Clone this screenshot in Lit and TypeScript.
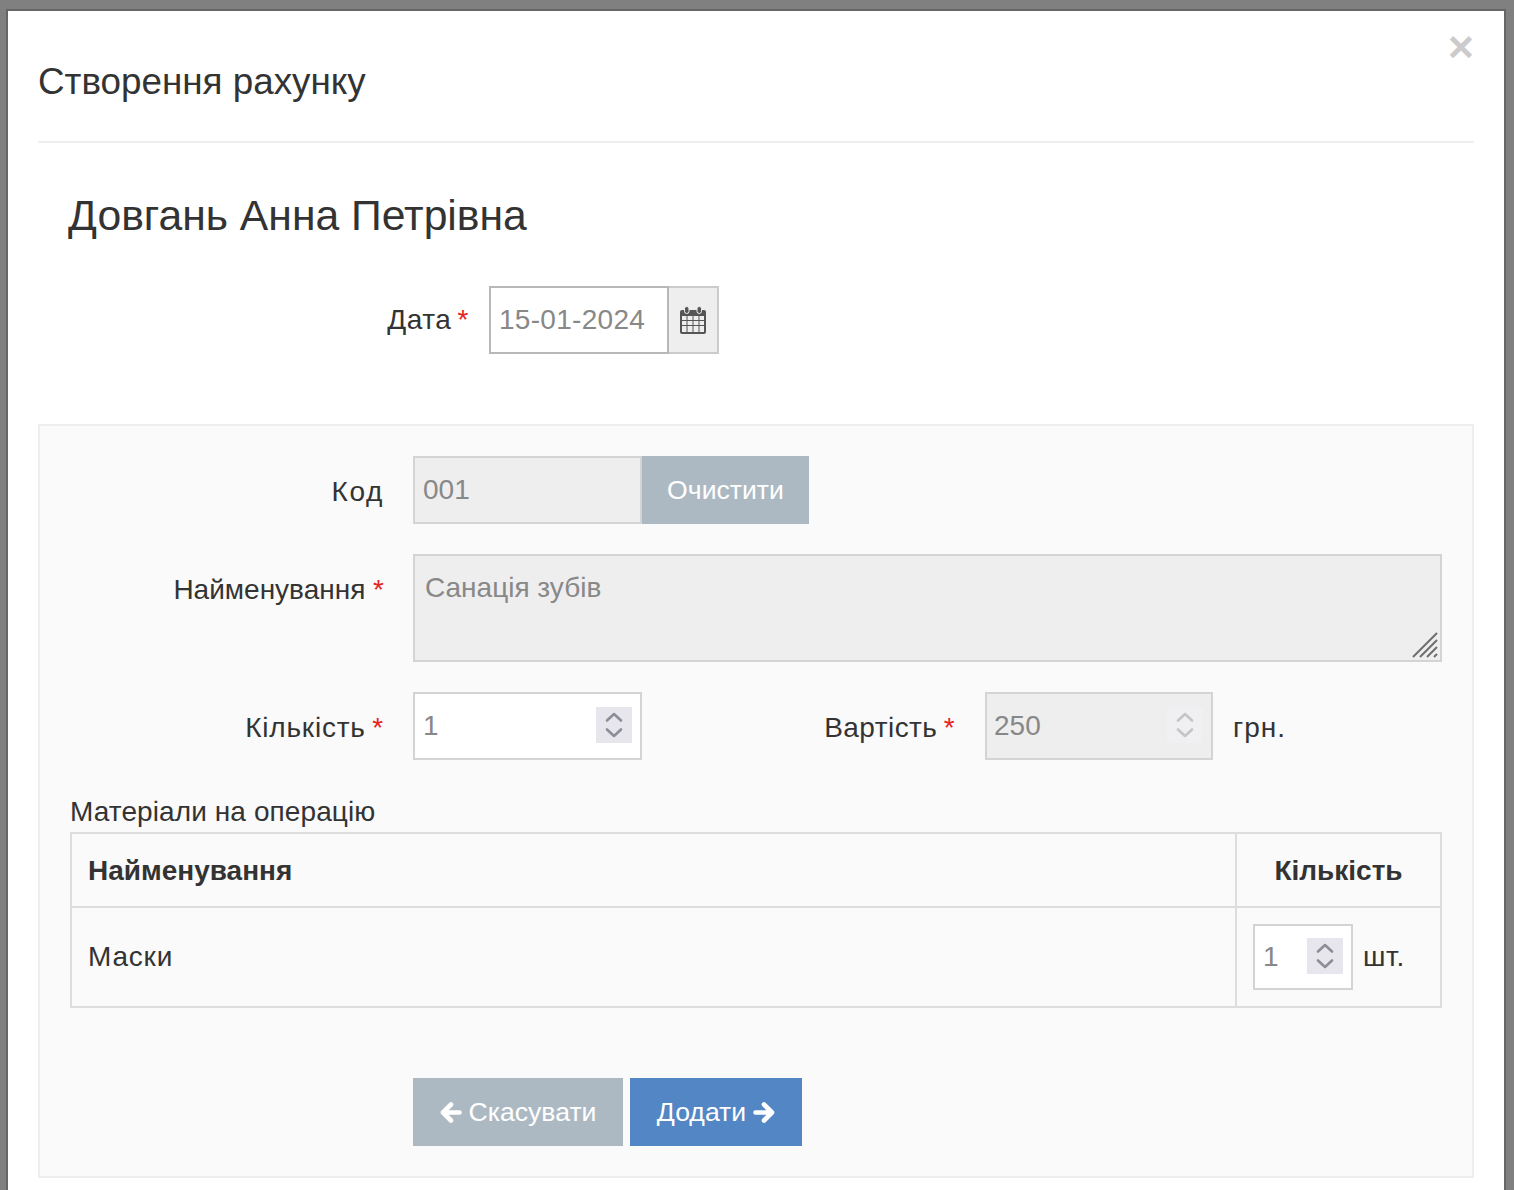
import { LitElement, html, css, svg } from "lit";
import { customElement } from "lit/decorators.js";

const chevrons = svg`<path d="M11 13.500 L18 7 L25 13.500 M11 22.500 L18 29 L25 22.500" fill="none" stroke="currentColor" stroke-width="2.600" stroke-linecap="round" stroke-linejoin="round"/>`;

@customElement("app-root")
export class AppRoot extends LitElement {
  static styles = css`
    :host { display: block; width: 1514px; height: 1190px; overflow: hidden; background: #808080; box-sizing: border-box; padding: 9px 8px 0 6px;
      font-family: "Liberation Sans", Arial, sans-serif; font-size: 28px; color: #333; }
    * { box-sizing: border-box; }
    .modal { position: relative; background: #fff; border: 2px solid #666; border-bottom: none; width: 1500px; height: 1181px; padding: 0 30px; }
    .close { position: absolute; top: 15px; right: 30px; font-size: 45px; line-height: 42px; font-weight: 700; color: #000; opacity: .2; }
    .head { height: 132px; border-bottom: 2px solid #eee; display: flex; align-items: center; padding-top: 11px; }
    h4 { margin: 0; font-size: 36.800px; font-weight: 400; line-height: 40px; }
    h1 { margin: 0; padding: 47px 30px 0; font-size: 42.700px; font-weight: 400; line-height: 50px; height: 98px; }
    .date-row { display: flex; align-items: center; height: 68px; margin-top: 45px; margin-bottom: 70px; }
    .date-label { width: 451px; text-align: right; padding-right: 20px; letter-spacing: .5px; word-spacing: -2px; }
    .req { color: #e6231e; }
    .date { display: flex; height: 68px; }
    .date input { width: 180px; border: 2px solid #b8b8b8; letter-spacing: .3px; }
    .addon { width: 50px; background: #eee; border: 2px solid #ccc; border-left: none; display: flex; align-items: center; justify-content: center; color: #555; }
    input, textarea { font: inherit; color: #888; background: #fff; outline: none; margin: 0; padding: 0 8px; height: 100%; }
    input[disabled], textarea[disabled] { opacity: 1; -webkit-text-fill-color: #888; }
    .panel { background: #fafafa; border: 2px solid #eee; padding: 30px; height: 754px; }
    .row { display: grid; grid-template-columns: 343px 1fr; margin-bottom: 30px; }
    .label { padding-right: 29px; text-align: right; line-height: 72px; height: 68px; }
    .ls-code { letter-spacing: 1.600px; }
    .ls-qty { letter-spacing: .8px; word-spacing: -2px; }
    .code { display: flex; height: 68px; }
    .code input { width: 229px; border: 2px solid #d4d4d4; background: #eee; }
    .btn { display: flex; align-items: center; justify-content: center; gap: 7px; color: #fff; height: 68px; font-size: 26.600px; padding-top: 1px; }
    .grey { background: #adb9c2; }
    .blue { background: #5386c4; }
    .clear { width: 167px; }
    .name { position: relative; height: 108px; border: 2px solid #d4d4d4; background: #eee; }
    textarea { display: block; width: 100%; height: 100%; border: none; background: transparent; resize: none; padding: 16px 10px 12px; line-height: 32px; }
    .grip { position: absolute; right: 2px; bottom: 2px; }
    .qty { display: flex; align-items: center; height: 68px; }
    .num { display: flex; align-items: center; border: 2px solid #d4d4d4; background: #fff; height: 68px; width: 229px; }
    .num input { flex: 1; min-width: 0; border: none; background: transparent; }
    .spin { flex: none; width: 36px; height: 36px; margin: 0 8px 2px 0; background: #e6e6ec; color: #8d8d97; }
    .spin svg { display: block; }
    .num.off { background: #eee; margin-left: 30px; width: 228px; }
    .num.off input { padding-left: 7px; }
    .num.off .spin { background: #f0f0f2; color: #c4c4c9; }
    .label2 { width: 313px; text-align: right; line-height: 68px; padding-top: 4px; letter-spacing: .45px; word-spacing: -2px; }
    .unit { margin-left: 20px; padding-top: 4px; letter-spacing: 1px; }
    .mats { line-height: 32px; height: 42px; padding-top: 6px; margin-top: 0; letter-spacing: .1px; }
    table { width: 1372px; border-collapse: collapse; table-layout: fixed; border: 2px solid #ddd; }
    td, th { border: 2px solid #ddd; padding: 0 16px; text-align: left; }
    th { height: 74px; padding-top: 2px; font-weight: 700; }
    th.c { text-align: center; }
    td { height: 100px; }
    .ls-mask { letter-spacing: .8px; }
    .cell { display: flex; align-items: center; gap: 10px; letter-spacing: .6px; }
    .cell .num { width: 100px; height: 66px; }
    .actions { display: flex; gap: 7px; margin: 70px 0 0 343px; }
    .cancel { width: 210px; }
    .add { width: 172px; }
    .arrow { flex: none; }
  `;

  spin() {
    return html`<div class="spin"><svg width="36" height="36" viewBox="0 0 36 36">${chevrons}</svg></div>`;
  }

  render() {
    return html`
      <div class="modal">
        <div class="close">×</div>
        <div class="head"><h4>Створення рахунку</h4></div>
        <h1>Довгань Анна Петрівна</h1>
        <div class="date-row">
          <div class="date-label">Дата <span class="req">*</span></div>
          <div class="date">
            <input value="15-01-2024" />
            <div class="addon">
              <svg width="26" height="28" viewBox="0 0 26 28">
                <path fill="currentColor" fill-rule="evenodd" d="M2 4h3v3h4V4h8v3h4V4h3a2 2 0 0 1 2 2v20a2 2 0 0 1-2 2H2a2 2 0 0 1-2-2V6a2 2 0 0 1 2-2zM2 10v4h4.500v-4zM7.500 10v4h5v-4zM13.500 10v4h5v-4zM19.500 10v4H24v-4zM2 15v4h4.500v-4zM7.500 15v4h5v-4zM13.500 15v4h5v-4zM19.500 15v4H24v-4zM2 20v6h4.500v-6zM7.500 20v6h5v-6zM13.500 20v6h5v-6zM19.500 20v6H24v-6z"/>
                <rect x="4.500" y="0.500" width="4.500" height="7" rx="2.200" fill="currentColor" stroke="#eee" stroke-width="1"/>
                <rect x="17" y="0.500" width="4.500" height="7" rx="2.200" fill="currentColor" stroke="#eee" stroke-width="1"/>
              </svg>
            </div>
          </div>
        </div>
        <div class="panel">
          <div class="row">
            <div class="label ls-code">Код</div>
            <div class="code">
              <input value="001" disabled />
              <div class="btn grey clear">Очистити</div>
            </div>
          </div>
          <div class="row">
            <div class="label">Найменування <span class="req">*</span></div>
            <div class="name">
              <textarea disabled>Санація зубів</textarea>
              <svg class="grip" width="26" height="26" viewBox="0 0 26 26">
                <path d="M1 25 L25 1 M8 25 L25 8 M15 25 L25 15 M22 25 L25 22" stroke="#6e6e6e" stroke-width="2" fill="none"/>
              </svg>
            </div>
          </div>
          <div class="row">
            <div class="label ls-qty">Кількість <span class="req">*</span></div>
            <div class="qty">
              <div class="num"><input value="1" />${this.spin()}</div>
              <div class="label2">Вартість <span class="req">*</span></div>
              <div class="num off"><input value="250" disabled />${this.spin()}</div>
              <div class="unit">грн.</div>
            </div>
          </div>
          <div class="mats">Матеріали на операцію</div>
          <table>
            <colgroup><col /><col width="205" /></colgroup>
            <tr><th>Найменування</th><th class="c">Кількість</th></tr>
            <tr>
              <td class="ls-mask">Маски</td>
              <td><div class="cell"><div class="num"><input value="1" />${this.spin()}</div>шт.</div></td>
            </tr>
          </table>
          <div class="actions">
            <div class="btn grey cancel">
              <svg class="arrow" width="22" height="23" viewBox="0 0 22 23"><path d="M11 3.500 L3 11.500 L11 19.500 M4 11.500 H19.500" fill="none" stroke="#fff" stroke-width="4.600" stroke-linecap="round" stroke-linejoin="round"/></svg>
              Скасувати
            </div>
            <div class="btn blue add">
              Додати
              <svg class="arrow" width="22" height="23" viewBox="0 0 22 23"><path d="M11 3.500 L19 11.500 L11 19.500 M18 11.500 H2.500" fill="none" stroke="#fff" stroke-width="4.600" stroke-linecap="round" stroke-linejoin="round"/></svg>
            </div>
          </div>
        </div>
      </div>
    `;
  }
}
